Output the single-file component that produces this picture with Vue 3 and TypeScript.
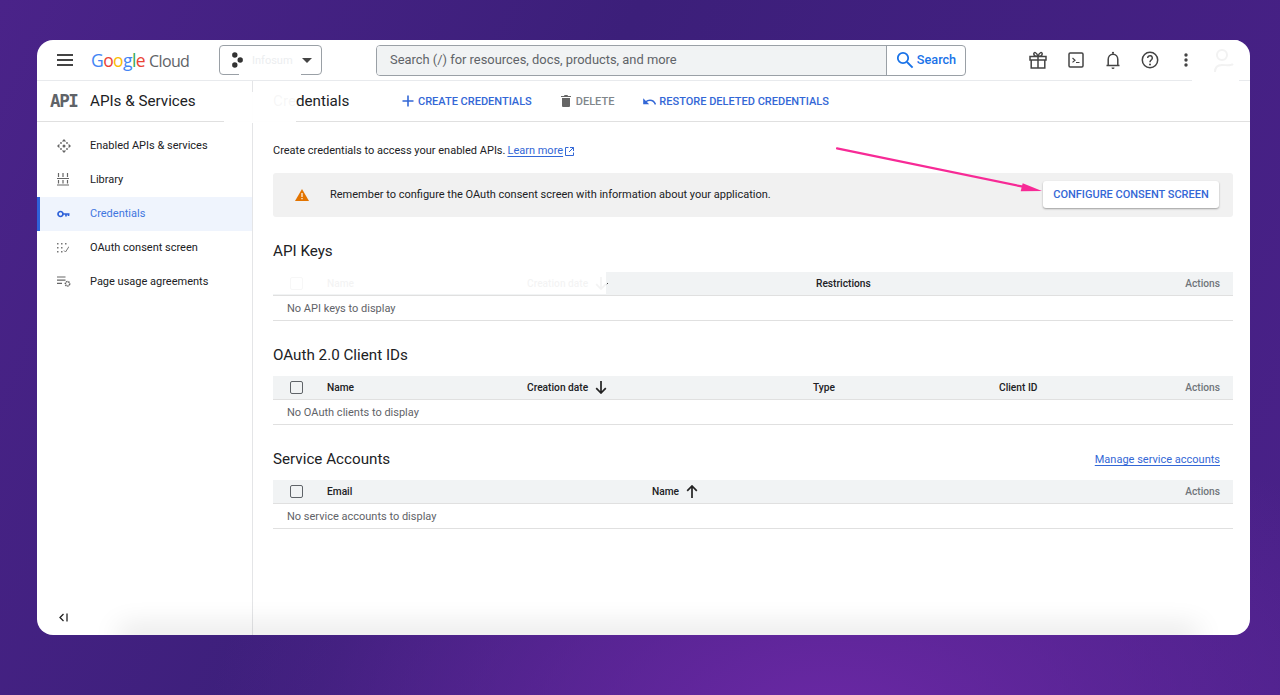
<script setup lang="ts">
interface Col { label: string; width: number; sort?: 'up' | 'down'; check?: boolean; }
interface Section { title: string; empty: string; cols: Col[]; manage?: boolean; redacted?: boolean; }

const nav = [
  { label: 'Enabled APIs & services', icon: 'enabled' },
  { label: 'Library', icon: 'library' },
  { label: 'Credentials', icon: 'key', active: true },
  { label: 'OAuth consent screen', icon: 'consent' },
  { label: 'Page usage agreements', icon: 'usage' },
];

const sections: Section[] = [
  {
    title: 'API Keys', empty: 'No API keys to display', redacted: true,
    cols: [
      { label: '', width: 54, check: true },
      { label: 'Name', width: 200 },
      { label: 'Creation date', width: 289, sort: 'down' },
      { label: 'Restrictions', width: 183 },
    ],
  },
  {
    title: 'OAuth 2.0 Client IDs', empty: 'No OAuth clients to display',
    cols: [
      { label: '', width: 54, check: true },
      { label: 'Name', width: 200 },
      { label: 'Creation date', width: 286, sort: 'down' },
      { label: 'Type', width: 186 },
      { label: 'Client ID', width: 100 },
    ],
  },
  {
    title: 'Service Accounts', empty: 'No service accounts to display', manage: true,
    cols: [
      { label: '', width: 54, check: true },
      { label: 'Email', width: 325 },
      { label: 'Name', width: 200, sort: 'up' },
    ],
  },
];
</script>

<template>
  <div class="stage">
    <div class="window">
      <header class="topbar">
        <svg class="menu" width="24" height="24" viewBox="0 0 24 24"><path d="M4 7h16M4 12h16M4 17h16" stroke="#444" stroke-width="1.8" fill="none" /></svg>
        <div class="logo">
          <span class="g-blue">G</span><span class="g-red">o</span><span class="g-yellow">o</span><span class="g-blue">g</span><span class="g-green">l</span><span class="g-red">e</span><span class="cloud">Cloud</span>
        </div>
        <div class="project">
          <svg class="fix" width="11" height="16" viewBox="0 0 11 16"><circle cx="2.800" cy="3" r="2.700" fill="#333" /><circle cx="8.200" cy="8" r="2.700" fill="#333" /><circle cx="2.800" cy="13" r="2.700" fill="#333" /></svg>
          <span class="project-name">Infosum</span>
          <svg class="fix" width="10" height="5" viewBox="0 0 10 5"><path d="M0 0h10L5 5z" fill="#444" /></svg>
        </div>
        <div class="search">
          <div class="search-input">Search (/) for resources, docs, products, and more</div>
          <div class="search-btn">
            <svg width="18" height="18" viewBox="0 0 18 18"><circle cx="7" cy="7" r="5.2" stroke="#1a73e8" stroke-width="1.8" fill="none" /><path d="M11 11l5.6 5.6" stroke="#1a73e8" stroke-width="1.9" /></svg>
            <span>Search</span>
          </div>
        </div>
        <div class="actions">
          <svg width="20" height="20" viewBox="0 0 20 20" fill="none" stroke="#444" stroke-width="1.5"><path d="M2 6.5h16v3.5H2zM3.2 10v8h13.600v-8M10 6.500V18M10 6.500C8 6.500 5.800 5.800 5.800 3.800 5.800 2 8.500 1.600 10 6.500zM10 6.500c2 0 4.200-.7 4.200-2.700 0-1.800-2.700-2.200-4.200 2.700z" /></svg>
          <svg width="18" height="18" viewBox="0 0 18 18" fill="none"><rect x="2" y="2" width="14" height="14" rx="1.200" stroke="#444" stroke-width="1.500" /><path d="M5.500 7l2.500 2.200-2.500 2.200M9 11.500h3.500" stroke="#444" stroke-width="1.200" /></svg>
          <svg width="18" height="20" viewBox="0 0 18 20" fill="none"><path d="M2.500 15.500h13M4.200 15.500V9.500c0-3 2-5.300 4.800-5.300s4.800 2.300 4.800 5.300v6" stroke="#444" stroke-width="1.500" /><circle cx="9" cy="2.800" r="1.100" fill="#444" /><path d="M7.500 17.500a1.500 1.500 0 003 0z" fill="#444" /></svg>
          <svg width="18" height="18" viewBox="0 0 18 18" fill="none"><circle cx="9" cy="9" r="7.700" stroke="#444" stroke-width="1.500" /><path d="M6.700 7a2.300 2.300 0 114 1.500C9.800 9.400 9 9.800 9 11.200" stroke="#444" stroke-width="1.500" /><circle cx="9" cy="13.400" r="1" fill="#444" /></svg>
          <svg class="dots" width="6" height="14" viewBox="0 0 6 14"><circle cx="3" cy="2" r="1.700" fill="#444" /><circle cx="3" cy="7" r="1.700" fill="#444" /><circle cx="3" cy="12" r="1.700" fill="#444" /></svg>
        </div>
      </header>

      <div class="body">
        <aside class="sidebar">
          <div class="side-head">
            <span class="api-badge">API</span>
            <span class="side-title">APIs &amp; Services</span>
          </div>
          <nav class="side-nav">
            <div v-for="item in nav" :key="item.label" class="nav-item" :class="{ active: item.active }">
              <span class="nav-icon">
                <svg v-if="item.icon === 'enabled'" width="14" height="14" viewBox="0 0 14 14" fill="#666"><path d="M7 0l2.200 2.400H4.800zM7 14l2.200-2.400H4.800zM0 7l2.400-2.200v4.400zM14 7l-2.400-2.200v4.400z" /><circle cx="7" cy="7" r="1.500" /><circle cx="4" cy="4" r=".9" /><circle cx="10" cy="4" r=".9" /><circle cx="4" cy="10" r=".9" /><circle cx="10" cy="10" r=".9" /></svg>
                <svg v-else-if="item.icon === 'library'" width="12" height="13" viewBox="0 0 12 13" fill="none" stroke="#666"><path d="M1.500 0v4M6 0v4M10.500 0v4M0 5.500h12M1.500 7v3.500M6 7v3.500M10.500 7v3.500M0 12h12" stroke-width="1.200" /></svg>
                <svg v-else-if="item.icon === 'key'" width="13" height="8" viewBox="0 0 13 8" fill="none"><circle cx="3.500" cy="4" r="2.500" stroke="#2f62d9" stroke-width="1.700" /><path d="M6 4h6.500M9 4v2.500M11.500 4v2" stroke="#2f62d9" stroke-width="1.700" /></svg>
                <svg v-else-if="item.icon === 'consent'" width="12" height="11" viewBox="0 0 12 11" fill="#777"><rect x="0" y="1" width="1.500" height="1.500" /><rect x="4" y="1" width="1.500" height="1.500" /><rect x="8" y="1" width="1.500" height="1.500" /><rect x="0" y="5" width="1.500" height="1.500" /><rect x="4" y="5" width="1.500" height="1.500" /><rect x="0" y="9" width="1.500" height="1.500" /><rect x="4" y="9" width="1.500" height="1.500" /><path d="M7 8.500l1.500 1.500L12 4.500" stroke="#777" stroke-width="1" fill="none" /></svg>
                <svg v-else width="14" height="11" viewBox="0 0 14 11" fill="none"><path d="M0 1h8.500M0 4.200h8.500M0 7.400h5" stroke="#666" stroke-width="1.200" /><circle cx="10.500" cy="7.800" r="2.200" stroke="#666" stroke-width="1.500" stroke-dasharray="1.400 .6" /></svg>
              </span>
              <span>{{ item.label }}</span>
            </div>
          </nav>
          <div class="collapse">
            <svg width="9" height="9" viewBox="0 0 9 9" fill="none" stroke="#222" stroke-width="1.300"><path d="M4.500 1L1 4.500 4.500 8M8 .5v8" /></svg>
          </div>
        </aside>

        <main class="main">
          <div class="subbar">
            <h1 class="page-title">Credentials</h1>
            <div class="btn blue create">
              <svg width="12" height="12" viewBox="0 0 12 12"><path d="M6 .5v11M.5 6h11" stroke="#3367d6" stroke-width="1.600" /></svg>
              CREATE CREDENTIALS
            </div>
            <div class="btn grey">
              <svg width="10" height="12" viewBox="0 0 10 12" fill="#666"><path d="M1 3h8v8a1 1 0 01-1 1H2a1 1 0 01-1-1zM0 1h3l.5-1h3l.5 1h3v1H0z" /></svg>
              DELETE
            </div>
            <div class="btn blue tight">
              <svg width="13" height="8" viewBox="0 0 13 8" fill="none"><path d="M12.500 7.500C11.500 4.500 9.500 3.200 7 3.200c-1.500 0-3 .5-4 1.600" stroke="#3367d6" stroke-width="1.500" /><path d="M0 1v6h6z" fill="#3367d6" transform="translate(.2 .2)" /></svg>
              RESTORE DELETED CREDENTIALS
            </div>
          </div>

          <div class="content">
            <p class="intro">
              Create credentials to access your enabled APIs.
              <a class="link">Learn more</a>
              <svg width="9" height="9" viewBox="0 0 9 9" fill="none" stroke="#3367d6"><path d="M3.500.5H.5v8h8v-3M5 .5h3.500V4M8.500.5L4 5" /></svg>
            </p>

            <div class="notice">
              <svg width="14" height="12" viewBox="0 0 14 12"><path d="M7 0l7 12H0z" fill="#e37400" /><path d="M6.400 4h1.200v4H6.400zM6.400 9h1.200v1.200H6.400z" fill="#fff" /></svg>
              <span class="notice-text">Remember to configure the OAuth consent screen with information about your application.</span>
              <div class="consent-btn">CONFIGURE CONSENT SCREEN</div>
            </div>

            <section v-for="s in sections" :key="s.title" class="section">
              <div class="section-head">
                <h2>{{ s.title }}</h2>
                <a v-if="s.manage" class="link">Manage service accounts</a>
              </div>
              <div class="thead">
                <div v-for="(c, i) in s.cols" :key="i" class="th" :style="{ width: c.width + 'px' }">
                  <span v-if="c.check" class="check"></span>
                  <template v-else>
                    <span>{{ c.label }}</span>
                    <svg v-if="c.sort" class="sort" :class="{ up: c.sort === 'up' }" width="12" height="13" viewBox="0 0 12 13" fill="none" stroke="#222" stroke-width="1.700"><path d="M6 0v12M1.200 7.200L6 12l4.800-4.800" /></svg>
                  </template>
                </div>
                <div class="th-actions">Actions</div>
                <div v-if="s.redacted" class="thead-patch"></div>
              </div>
              <div class="empty">{{ s.empty }}</div>
            </section>
          </div>
        </main>
      </div>

      <div class="patch patch-top"></div>
      <div class="patch patch-title"></div>
      <div class="patch patch-avatar">
        <svg width="22" height="24" viewBox="0 0 22 24" fill="none" stroke="#f2f2f2" stroke-width="2"><circle cx="10" cy="6" r="5" /><path d="M3 23c0-5 3-7 7-7 4 0 9 1 11-1" /></svg>
      </div>
      <div class="bottom-glow"></div>
    </div>

    <svg class="arrow" width="220" height="50" viewBox="0 0 220 50">
      <path d="M1 2.300L187 40.700" stroke="#f72a96" stroke-width="2.200" stroke-linecap="round" />
      <path d="M206 45L184.700 45.300 186.700 37.300z" fill="#f72a96" />
    </svg>
  </div>
</template>

<style>
html, body { margin: 0; padding: 0; }
</style>

<style scoped>
.stage {
  position: relative;
  width: 1280px;
  height: 695px;
  box-sizing: border-box;
  padding: 40px 30px 60px 37px;
  overflow: hidden;
  font-family: Roboto, "Liberation Sans", sans-serif;
  color: #202124;
  background:
    radial-gradient(ellipse 620px 340px at 830px 720px, #6a28a4 0%, rgba(106, 40, 164, 0) 100%),
    linear-gradient(115deg, #4a2389 0%, #3c1f7a 40%, #4a2189 100%);
}
.window {
  position: relative;
  width: 1213px;
  height: 595px;
  background: #fff;
  border-radius: 16px;
  overflow: hidden;
  display: flex;
  flex-direction: column;
}
.topbar {
  height: 40px;
  flex: none;
  display: flex;
  align-items: center;
  border-bottom: 1px solid #e8eaed;
}
.menu { margin-left: 16px; }
.logo {
  margin-left: 14px;
  width: 128px;
  font-family: "Open Sans", sans-serif;
  font-size: 17.5px;
  letter-spacing: -0.6px;
  white-space: nowrap;
}
.g-blue { color: #4285f4; }
.g-red { color: #ea4335; }
.g-yellow { color: #fbbc04; }
.g-green { color: #34a853; }
.cloud { color: #5f6368; margin-left: 4px; font-size: 16px; }
.project {
  width: 103px;
  height: 30px;
  box-sizing: border-box;
  border: 1px solid #9aa0a6;
  border-radius: 4px;
  display: flex;
  align-items: center;
  padding: 0 12px;
  gap: 9px;
}
.fix { flex: none; }
.project-name { font-size: 11px; color: #eceef0; flex: 1; }
.search {
  margin-left: 54px;
  width: 590px;
  height: 31px;
  box-sizing: border-box;
  border: 1px solid #9aa0a6;
  border-radius: 4px;
  display: flex;
  overflow: hidden;
}
.search-input {
  flex: 1;
  background: #f1f3f4;
  color: #5f6368;
  font-size: 12.900px;
  line-height: 28px;
  padding-left: 13px;
  border-right: 1px solid #9aa0a6;
}
.search-btn {
  width: 78px;
  display: flex;
  align-items: center;
  justify-content: center;
  gap: 3px;
  color: #1a73e8;
  font-size: 12.700px;
  font-weight: 500;
  padding-bottom: 1px;
}
.actions {
  margin-left: 62px;
  display: flex;
  align-items: center;
  gap: 19px;
}
.dots { margin-left: 5px; }
.body { flex: 1; display: flex; min-height: 0; }
.sidebar {
  width: 216px;
  box-sizing: border-box;
  flex: none;
  border-right: 1px solid #e4e5e7;
  display: flex;
  flex-direction: column;
}
.side-head {
  height: 40px;
  flex: none;
  display: flex;
  align-items: center;
  border-bottom: 1px solid #e0e0e0;
}
.api-badge {
  width: 53px;
  box-sizing: border-box;
  padding-left: 13px;
  font-family: "DejaVu Sans Mono", monospace;
  font-size: 17.500px;
  font-weight: 700;
  color: #5f6368;
  letter-spacing: -1.400px;
}
.side-title { font-size: 15.200px; color: #202124; }
.side-nav { padding-top: 7px; flex: 1; }
.nav-item {
  height: 34px;
  box-sizing: border-box;
  padding-bottom: 1px;
  display: flex;
  align-items: center;
  font-size: 11px;
  color: #202124;
  border-left: 3px solid transparent;
}
.nav-item.active {
  border-left-color: #2f62d9;
  color: #3f76e0;
  background: #eff4fd;
}
.nav-icon {
  width: 50px;
  padding-left: 17px;
  box-sizing: border-box;
  display: flex;
  align-items: center;
}
.collapse { height: 22px; padding-left: 22px; display: flex; align-items: flex-start; }
.main { flex: 1; min-width: 0; display: flex; flex-direction: column; }
.subbar {
  height: 40px;
  flex: none;
  display: flex;
  align-items: center;
  border-bottom: 1px solid #e0e0e0;
  padding-left: 20px;
}
.page-title {
  margin: 0;
  width: 129px;
  font-size: 15.200px;
  font-weight: 400;
}
.btn {
  display: flex;
  align-items: center;
  gap: 5px;
  font-size: 11px;
  font-weight: 500;
  margin-right: 29px;
}
.btn.create { gap: 4px; }
.btn.tight { gap: 3px; }
.btn.blue { color: #3367d6; }
.btn.grey { color: #80868b; }
.content { padding: 0 17px 0 20px; }
.intro {
  margin: 22px 0 0;
  height: 14px;
  font-size: 11px;
  line-height: 14px;
  display: flex;
  align-items: center;
  gap: 2px;
}
.link { color: #3367d6; text-decoration: underline; text-underline-offset: 2px; font-size: 11px; }
.notice {
  margin-top: 15px;
  height: 44px;
  box-sizing: border-box;
  background: #f1f1f1;
  border-radius: 3px;
  display: flex;
  align-items: center;
  padding: 0 14px 0 22px;
  font-size: 11px;
}
.notice-text { margin-left: 21px; flex: 1; padding-bottom: 1px; }
.consent-btn {
  width: 176px;
  height: 27px;
  background: #fff;
  border-radius: 3px;
  box-shadow: 0 1px 2px rgba(0, 0, 0, 0.35);
  color: #3367d6;
  font-size: 11px;
  font-weight: 500;
  line-height: 27px;
  text-align: center;
  margin-top: -2px;
}
.section { height: 104px; }
.section:first-of-type { margin-top: 25px; }
.section-head {
  height: 30px;
  display: flex;
  justify-content: space-between;
  padding-right: 13px;
  align-items: flex-start;
}
.section-head h2 {
  margin: 0;
  font-size: 15.200px;
  font-weight: 400;
  line-height: 18px;
}
.section-head .link { line-height: 20px; }
.thead {
  position: relative;
  height: 24px;
  box-sizing: border-box;
  background: #f1f3f4;
  border-bottom: 1px solid #e0e0e0;
  display: flex;
  align-items: center;
  font-size: 10.200px;
  font-weight: 500;
}
.th { display: flex; align-items: center; height: 100%; flex: none; }
.th:first-child { padding-left: 17px; box-sizing: border-box; }
.check {
  width: 11px;
  height: 11px;
  border: 1.500px solid #5f6368;
  border-radius: 2px;
}
.sort { margin-left: 7px; }
.sort.up { transform: rotate(180deg); }
.th-actions { margin-left: auto; padding-right: 13px; color: #70757a; }
.thead-patch {
  position: absolute;
  left: 0;
  top: 0;
  width: 333px;
  height: 22px;
  background: rgba(255, 255, 255, 0.95);
}
.thead-patch::after {
  content: "";
  position: absolute;
  right: -2px;
  top: 11px;
  width: 1px;
  height: 1px;
  background: #444;
}
.empty {
  height: 25px;
  box-sizing: border-box;
  border-bottom: 1px solid #e0e0e0;
  padding-left: 14px;
  font-size: 11px;
  line-height: 25px;
  color: #5f6368;
}
.patch { position: absolute; background: #fff; }
.patch-top { left: 202px; top: 33px; width: 62px; height: 5px; }
.patch-title { left: 187px; top: 52px; width: 72px; height: 31px; background: rgba(255, 255, 255, 0.96); }
.patch-avatar { left: 1155px; top: 0; width: 47px; height: 41px; box-sizing: border-box; padding: 9px 0 0 20px; }
.bottom-glow {
  position: absolute;
  left: 90px;
  right: 60px;
  bottom: -2px;
  height: 2px;
  box-shadow: 0 0 28px 8px rgba(0, 0, 0, 0.12);
}
.arrow { position: absolute; left: 836px; top: 146px; }
</style>
